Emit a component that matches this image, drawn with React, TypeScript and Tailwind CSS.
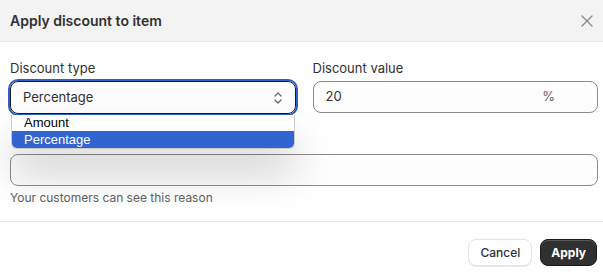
export default function App() {
  return (
    <div className="relative w-[603px] h-[274px] overflow-hidden bg-white font-['Inter',sans-serif] text-[#303030]">
      {/* Header */}
      <div className="h-[42px] flex items-center justify-between pl-[10px] pr-[10px] bg-[#f3f3f3] border-b border-[#e3e3e3]">
        <h2 className="text-[14px] font-semibold text-[#303030]">Apply discount to item</h2>
        <svg width="12" height="12" viewBox="0 0 12 12" fill="none">
          <path d="M1 1L11 11M11 1L1 11" stroke="#8a8a8a" strokeWidth="1.4" strokeLinecap="round" />
        </svg>
      </div>

      {/* Body */}
      <div className="pl-[10px] pr-[5px] pt-[18px] pb-[15px] border-b border-[#e3e3e3]">
        <div className="grid grid-cols-2 gap-x-[17px]">
          <div className="relative">
            <label className="block text-[13px] leading-[16px] mb-[5px]">Discount type</label>
            <div className="relative h-[33px] flex items-center justify-between pl-[12px] pr-[12px] rounded-[8px] border border-[#1a1a1a] bg-[#fdfdfd] outline outline-2 outline-offset-[0px] outline-[#2c5fc7]">
              <span className="text-[13px]">Percentage</span>
              <svg width="10" height="14" viewBox="0 0 10 14" fill="none">
                <path d="M2 5L5 2L8 5M2 9L5 12L8 9" stroke="#616161" strokeWidth="1.2" strokeLinecap="round" strokeLinejoin="round" />
              </svg>
            </div>
            {/* Open option list */}
            <div className="absolute z-10 left-[1px] right-[1px] top-[55px] bg-white rounded-b-[6px] overflow-hidden shadow-[0_24px_40px_rgba(0,0,0,0.18)] border-x border-b border-[#c9c9c9] font-['Liberation_Sans','Inter',sans-serif]">
              <div className="h-[16px] pl-[12px] flex items-center text-[13px] text-[#000]">Amount</div>
              <div className="h-[17px] pl-[12px] flex items-center text-[13px] text-white bg-[#3164d0]">Percentage</div>
            </div>
          </div>
          <div>
            <label className="block text-[13px] leading-[16px] mb-[5px]">Discount value</label>
            <div className="h-[32px] flex items-center justify-between pl-[12px] pr-[42px] rounded-[8px] border border-[#8a8a8a] bg-[#fdfdfd]">
              <span className="text-[13px]">20</span>
              <span className="text-[13px] text-[#616161]">%</span>
            </div>
          </div>
        </div>

        {/* reason label sits under the open list */}
        <div className="mt-[18px] h-[16px] mb-[6px]" />
        <div className="h-[32px] rounded-[8px] border border-[#8a8a8a] bg-[#fdfdfd]" />
        <p className="mt-[4px] text-[12px] leading-[16px] text-[#616161]">Your customers can see this reason</p>
      </div>

      {/* Footer */}
      <div className="flex justify-end gap-[8px] pr-[6px] pt-[17px]">
        <button className="h-[27px] px-[11px] rounded-[8px] border border-[#e3e3e3] bg-white text-[12px] font-medium text-[#303030] shadow-[0_1px_0_rgba(0,0,0,0.08)]">
          Cancel
        </button>
        <button className="h-[27px] px-[10px] rounded-[8px] bg-[#303030] border border-[#1a1a1a] text-[12px] font-bold text-white shadow-[inset_0_1px_0_rgba(255,255,255,0.2)]">
          Apply
        </button>
      </div>
    </div>
  )
}
